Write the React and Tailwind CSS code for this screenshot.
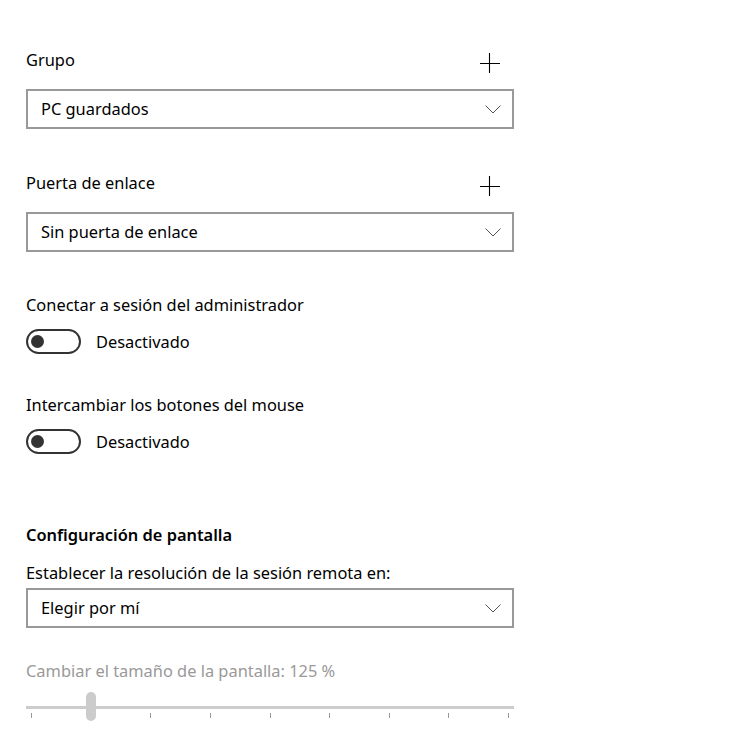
import React from "react";

const Chevron = () => (
  <svg width="16" height="9" viewBox="0 0 16 9" className="shrink-0">
    <path d="M0.5 0.5 L8 8 L15.5 0.5" fill="none" stroke="#555" strokeWidth="1" />
  </svg>
);

const Plus = () => (
  <svg width="20" height="20" viewBox="0 0 20 20" className="mr-[14px] mt-[6px]">
    <path d="M0 10.5 H20 M9.5 0 V20" stroke="#000" strokeWidth="1.1" />
  </svg>
);

const Dropdown = ({ value, className = "" }) => (
  <div className={`flex h-[40px] w-[488px] items-center justify-between border-2 border-[#999] pl-[13px] pr-[11px] ${className}`}>
    <span className="text-[16.4px] leading-[24px] text-black">{value}</span>
    <Chevron />
  </div>
);

const Toggle = ({ className = "" }) => (
  <div className={`flex items-center ${className}`}>
    <div className="flex h-[25px] w-[55px] items-center rounded-full border-[2.5px] border-[#333] pl-[3px]">
      <div className="h-[12.5px] w-[12.5px] rounded-full bg-[#333]" />
    </div>
    <span className="ml-[15px] text-[16.4px] leading-[24px] text-black">Desactivado</span>
  </div>
);

export default function App() {
  const ticks = [0, 1, 2, 3, 4, 5, 6, 7, 8];
  return (
    <div
      className="min-h-[752px] w-[750px] bg-white pl-[26px] pt-[48px] text-black"
      style={{ fontFamily: '"Noto Sans", "Open Sans", sans-serif' }}
    >
      <div className="flex h-[24px] w-[488px] items-center justify-between">
        <span className="text-[16.4px] leading-[24px]">Grupo</span>
        <Plus />
      </div>
      <Dropdown value="PC guardados" className="mt-[17px]" />

      <div className="mt-[42px] flex h-[24px] w-[488px] items-center justify-between">
        <span className="text-[16.4px] leading-[24px]">Puerta de enlace</span>
        <Plus />
      </div>
      <Dropdown value="Sin puerta de enlace" className="mt-[17px]" />

      <div className="mt-[41px] text-[16.4px] leading-[24px]">Conectar a sesión del administrador</div>
      <Toggle className="mt-[12px]" />

      <div className="mt-[39px] text-[16.4px] leading-[24px]">Intercambiar los botones del mouse</div>
      <Toggle className="mt-[12px]" />

      <div className="mt-[69px] text-[16.4px] font-semibold leading-[24px]">Configuración de pantalla</div>
      <div className="mt-[14px] text-[16.4px] leading-[24px]">Establecer la resolución de la sesión remota en:</div>
      <Dropdown value="Elegir por mí" className="mt-[3px]" />

      <div className="mt-[31px] text-[16.4px] leading-[24px] text-[#999]">Cambiar el tamaño de la pantalla: 125 %</div>
      <div className="relative mt-[9px] h-[29px] w-[488px]">
        <div className="pt-[14px]">
          <div className="h-[3px] w-full bg-[#ccc]" />
          <div className="mt-[4px] flex justify-between px-[5px]">
            {ticks.map((t) => (
              <div key={t} className="h-[5px] w-[1px] bg-[#999]" />
            ))}
          </div>
        </div>
        <div className="absolute left-[60px] top-0 z-10 h-[29px] w-[10px] rounded-full bg-[#ccc]" />
      </div>
    </div>
  );
}
